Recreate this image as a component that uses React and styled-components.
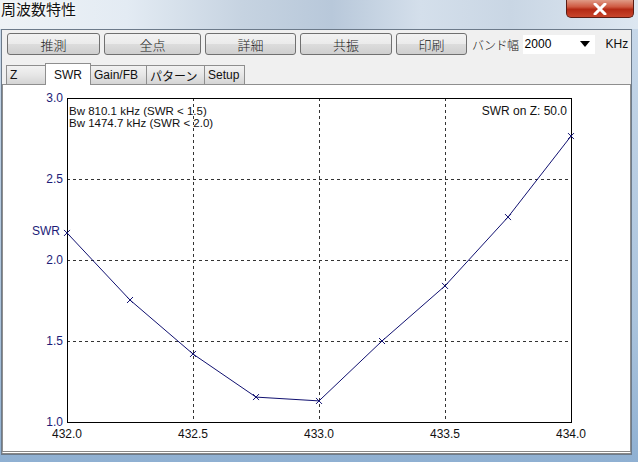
import styled, { createGlobalStyle } from 'styled-components';

const GlobalStyle = createGlobalStyle`
	html, body {
		margin: 0;
		padding: 0;
		width: 638px;
		height: 462px;
		overflow: hidden;
		font-family: "Liberation Sans", "Noto Sans CJK JP", sans-serif;
	}
`;

const Window = styled.div`
	width: 638px;
	height: 462px;
	display: flex;
	flex-direction: column;
	background: linear-gradient(180deg, #c9d9ea 0%, #aac3dc 70%, #8fb0d2 100%);
`;

const TitleBar = styled.div`
	height: 29px;
	display: flex;
	justify-content: space-between;
	align-items: flex-start;
	background: linear-gradient(90deg, #eef2f6 0%, #e3ebf3 20%, #c6d3e1 38%, #b8c8da 52%, #d4dfeb 66%, #c9d6e4 80%, #dde7f1 100%);
`;

const Title = styled.div`
	font-family: "Noto Sans CJK JP", sans-serif;
	font-size: 15px;
	line-height: 18px;
	color: #111;
	padding-left: 1px;
	text-shadow: 0 0 6px #fff, 0 0 3px #fff;
`;

const CloseButton = styled.div`
	width: 68px;
	height: 18px;
	margin-right: 4px;
	border: 1px solid #5a1c14;
	border-top: none;
	border-radius: 0 0 5px 5px;
	background: linear-gradient(180deg, #e09a86 0%, #cf5a42 40%, #b42a15 55%, #c8452c 100%);
	display: flex;
	align-items: center;
	justify-content: center;
	box-sizing: border-box;
`;

const Client = styled.div`
	flex: 1;
	margin: 0 6px 7px 1px;
	background: #f0f0f0;
	border: 1px solid #6c7a8a;
	display: flex;
	flex-direction: column;
	min-height: 0;
`;

const Toolbar = styled.div`
	display: flex;
	align-items: center;
	padding: 2px 0 0 5px;
	height: 24px;
	gap: 4px;
	white-space: nowrap;
`;

const Button = styled.div`
	flex: none;
	width: ${(p) => p.w}px;
	height: 22px;
	box-sizing: border-box;
	border: 1px solid #707070;
	border-radius: 3px;
	background: linear-gradient(180deg, #f2f2f2 0%, #ebebeb 48%, #dcdcdc 52%, #cfcfcf 100%);
	display: flex;
	align-items: center;
	justify-content: center;
	font-family: "Noto Sans CJK JP", sans-serif;
	font-size: 13px;
	font-weight: 300;
	color: #222;
`;

const Label = styled.div`
	flex: none;
	font-family: "Noto Sans CJK JP", sans-serif;
	font-size: 12px;
	font-weight: 300;
	color: #111;
	margin-left: 1px;
	letter-spacing: -0.5px;
`;

const Combo = styled.div`
	flex: none;
	width: 72px;
	height: 19px;
	background: #fff;
	display: flex;
	align-items: center;
	justify-content: space-between;
	padding: 0 5px 0 2px;
	box-sizing: border-box;
	font-size: 12px;
	color: #000;
`;

const Unit = styled.div`
	flex: none;
	font-size: 12px;
	color: #111;
	margin-left: 7px;
`;

const TabRow = styled.div`
	display: flex;
	align-items: flex-end;
	padding-left: 4px;
	margin-top: 6px;
	height: 23px;
`;

const Tab = styled.div`
	width: ${(p) => p.w}px;
	height: ${(p) => (p.active ? 22 : 20)}px;
	box-sizing: border-box;
	border: 1px solid #8e8e8e;
	border-bottom: ${(p) => (p.active ? 'none' : '1px solid #8e8e8e')};
	margin-left: ${(p) => (p.first ? 0 : -1)}px;
	background: ${(p) => (p.active ? '#fff' : 'linear-gradient(180deg, #f2f2f2 0%, #e6e6e6 50%, #d4d4d4 100%)')};
	display: flex;
	align-items: center;
	padding-left: ${(p) => (p.active ? 8 : 3)}px;
	font-family: "Liberation Sans", "Noto Sans CJK JP", sans-serif;
	font-size: 12px;
	color: #111;
	position: relative;
	z-index: ${(p) => (p.active ? 1 : 0)};
`;

const Panel = styled.div`
	flex: 1;
	background: #fff;
	border: 1px solid #8e8e8e;
	border-bottom: 3px double #888;
	margin-top: -1px;
	min-height: 0;
	overflow: hidden;
`;

const tabs = [
	{ label: 'Z', w: 40 },
	{ label: 'SWR', w: 46, active: true },
	{ label: 'Gain/FB', w: 57 },
	{ label: 'パターン', w: 59 },
	{ label: 'Setup', w: 41 },
];

const points = [2.167, 1.753, 1.42, 1.154, 1.13, 1.5, 1.84, 2.265, 2.765];

const X0 = 66;
const X1 = 570;
const Y0 = 421;
const Y1 = 97;
const px = (i) => X0 + (i * (X1 - X0)) / 8;
const py = (v) => Y0 - ((v - 1) * (Y0 - Y1)) / 2;

const Chart = () => {
	const path = points.map((v, i) => `${i ? 'L' : 'M'}${px(i)} ${py(v).toFixed(1)}`).join(' ');
	const yTicks = [1.0, 1.5, 2.0, 2.5, 3.0];
	const xTicks = ['432.0', '432.5', '433.0', '433.5', '434.0'];
	return (
		<svg width="629" height="366" viewBox="2 84 629 366" style={{ display: 'block' }}>
			{[178, 259, 340].map((y) => (
				<line key={y} x1={X0} x2={X1} y1={y + 0.5} y2={y + 0.5} stroke="#333" strokeDasharray="3 3" />
			))}
			{[192, 318, 444].map((x) => (
				<line key={x} x1={x + 0.5} x2={x + 0.5} y1={Y1} y2={Y0} stroke="#333" strokeDasharray="3 3" />
			))}
			<rect x={X0 + 0.5} y={Y1 + 0.5} width={X1 - X0} height={Y0 - Y1} fill="none" stroke="#000" />
			<path d={path} fill="none" stroke="#101070" strokeWidth="1" />
			{points.map((v, i) => {
				const x = px(i);
				const y = py(v);
				return (
					<path key={i} d={`M${x - 3} ${y - 3} L${x + 3} ${y + 3} M${x - 3} ${y + 3} L${x + 3} ${y - 3}`} stroke="#101070" strokeWidth="1" />
				);
			})}
			<g fontFamily="Liberation Sans, sans-serif" fontSize="12">
				{yTicks.map((v) => (
					<text key={v} x="62" y={py(v) + 4} textAnchor="end" fill="#1c1c78">
						{v.toFixed(1)}
					</text>
				))}
				<text x="59" y="234" textAnchor="end" fill="#1c1c78">SWR</text>
				{xTicks.map((t, i) => (
					<text key={t} x={X0 + i * 126} y="437" textAnchor="middle" fill="#111">
						{t}
					</text>
				))}
				<g fontSize="11.5">
					<text x="68" y="114" fill="#111">Bw 810.1 kHz (SWR &lt; 1.5)</text>
					<text x="68" y="126" fill="#111">Bw 1474.7 kHz (SWR &lt; 2.0)</text>
				</g>
				<text x="566" y="114" textAnchor="end" fill="#111">SWR on Z: 50.0</text>
			</g>
		</svg>
	);
};

const App = () => {
	return (
		<Window>
			<GlobalStyle />
			<TitleBar>
				<Title>周波数特性</Title>
				<CloseButton>
					<svg width="16" height="12" viewBox="0 0 16 12">
						<path d="M3 1 L13 11 M13 1 L3 11" stroke="#fff" strokeWidth="3" strokeLinecap="round" />
					</svg>
				</CloseButton>
			</TitleBar>
			<Client>
				<Toolbar>
					<Button w={93}>推測</Button>
					<Button w={97}>全点</Button>
					<Button w={91}>詳細</Button>
					<Button w={92}>共振</Button>
					<Button w={71}>印刷</Button>
					<Label>バンド幅</Label>
					<Combo>
						<span>2000</span>
						<svg width="10" height="6" viewBox="0 0 10 6">
							<path d="M0 0 L10 0 L5 6 Z" fill="#000" />
						</svg>
					</Combo>
					<Unit>KHz</Unit>
				</Toolbar>
				<TabRow>
					{tabs.map((t, i) => (
						<Tab key={t.label} w={t.w} active={t.active} first={i === 0}>
							{t.label}
						</Tab>
					))}
				</TabRow>
				<Panel>
					<Chart />
				</Panel>
			</Client>
		</Window>
	);
};

export default App;
